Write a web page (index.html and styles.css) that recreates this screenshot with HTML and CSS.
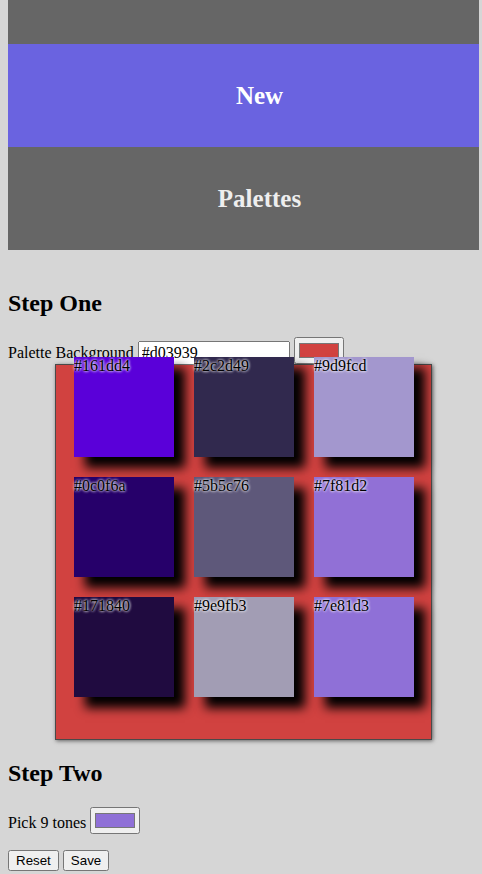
FILE: index.html
```html
<!DOCTYPE html>
<html>
<head>
<meta charset="utf-8">
<title>Palette Maker</title>
<link rel="stylesheet" href="styles.css">
</head>
<body>
<div class="page">
  <nav class="nav">
    <a class="nav-item partial"><span>Display</span></a>
    <a class="nav-item active"><span>New</span></a>
    <a class="nav-item"><span>Palettes</span></a>
  </nav>

  <h2 class="step">Step One</h2>
  <p class="row bg-row">Palette Background <input class="hex-input" type="text" value="#d03939"> <input class="color-input" type="color" value="#d14240"></p>

  <div class="palette">
    <div class="grid">
      <div class="swatch" style="background:#5a00d9"><span class="label">#161dd4</span></div>
      <div class="swatch" style="background:#31294e"><span class="label">#2c2d49</span></div>
      <div class="swatch" style="background:#a397ce"><span class="label">#9d9fcd</span></div>
      <div class="swatch" style="background:#26006a"><span class="label">#0c0f6a</span></div>
      <div class="swatch" style="background:#5e587a"><span class="label">#5b5c76</span></div>
      <div class="swatch" style="background:#9170d6"><span class="label">#7f81d2</span></div>
      <div class="swatch" style="background:#200b40"><span class="label">#171840</span></div>
      <div class="swatch" style="background:#a29db4"><span class="label">#9e9fb3</span></div>
      <div class="swatch" style="background:#8f70d7"><span class="label">#7e81d3</span></div>
    </div>
  </div>

  <h2 class="step">Step Two</h2>
  <p class="row">Pick 9 tones <input class="color-input" type="color" value="#8f70d7"></p>
  <div class="actions"><button class="btn">Reset</button> <button class="btn">Save</button></div>
</div>
</body>
</html>
```

FILE: styles.css
```css
html, body {
  background: #d6d6d6;
}
body {
  margin: 0 0 0 8px;
  font-family: "Liberation Serif", "Times New Roman", serif;
  font-size: 16px;
  color: #000;
}
.page {
  width: 471px;
}
.nav {
  display: flex;
  flex-direction: column;
  margin-bottom: 40px;
}
.nav-item {
  display: flex;
  align-items: center;
  justify-content: center;
  height: 103px;
  padding-left: 32px;
  background: #666666;
  color: #eeeeee;
  font-weight: bold;
  font-size: 25px;
  text-decoration: none;
  overflow: hidden;
}
.nav-item.partial {
  height: 43px;
  box-sizing: border-box;
  align-items: flex-end;
  padding-bottom: 44px;
}
.nav-item.active {
  background: #6a63e0;
  color: #ffffff;
}
.step {
  font-size: 24px;
  font-weight: bold;
  margin: 19.92px 0;
}
.row {
  margin: 16px 0;
}
.bg-row {
  margin-bottom: 0;
}
.hex-input {
  width: 144px;
  font: inherit;
}
.palette {
  width: 340px;
  margin: -1px auto 0;
  padding: 0 17px 42px 18px;
  background: #d14240;
  border: 1px solid #4a4a4a;
  box-shadow: 1px 1px 4px rgba(0, 0, 0, 0.55);
}
.grid {
  display: grid;
  grid-template-columns: repeat(3, 100px);
  grid-auto-rows: 100px;
  gap: 20px;
  margin-top: -8px;
}
.swatch {
  box-shadow: 11px 11px 10px #000;
}
.label {
  display: block;
  line-height: 18px;
  color: #000;
  text-shadow: 0 0 3px #fff, 0 0 3px #fff;
}
.actions {
  margin: 0;
}
.btn {
  font-family: "Liberation Sans", Arial, sans-serif;
  font-size: 13.33px;
}
```
